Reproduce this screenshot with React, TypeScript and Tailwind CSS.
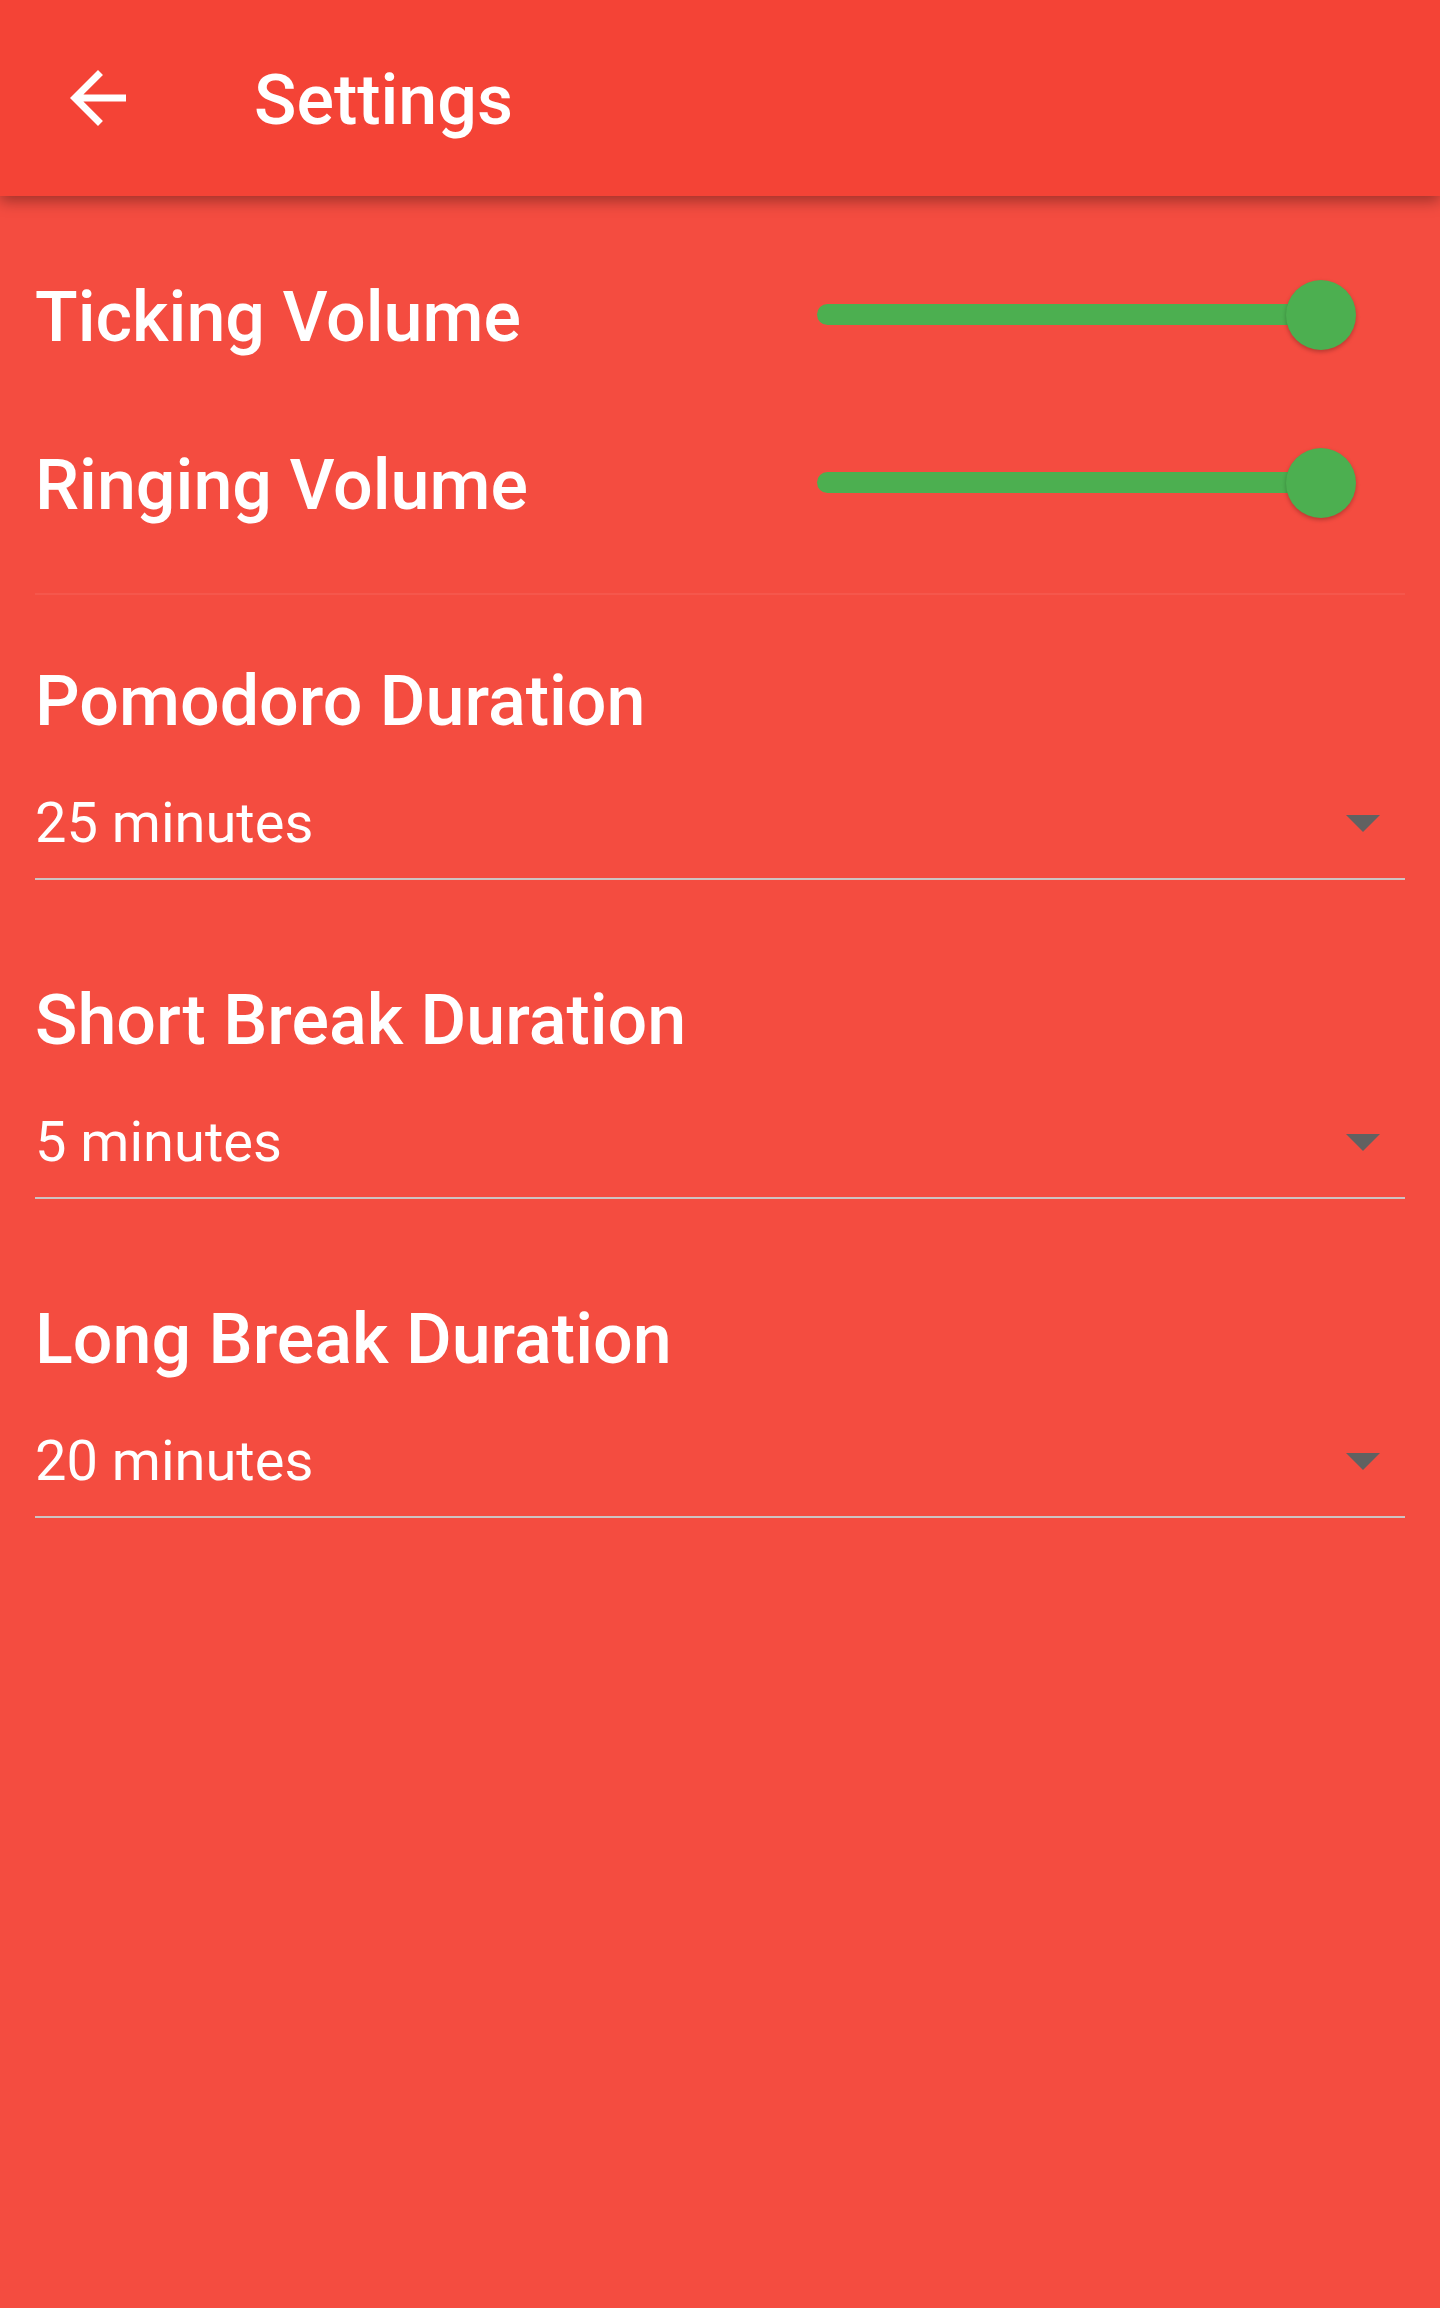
const volumes = [
  {label: "Ticking Volume", value: 100},
  {label: "Ringing Volume", value: 100},
];

const durations = [
  {label: "Pomodoro Duration", value: "25 minutes"},
  {label: "Short Break Duration", value: "5 minutes"},
  {label: "Long Break Duration", value: "20 minutes"},
];

const VolumeSlider = ({value}: {value: number}) => {
  return (
    <div className="relative h-[70px] w-[539px]">
      <div className="absolute top-[24px] left-0 h-[21px] rounded-full bg-[#4CAF50]" style={{width: `${(value / 100) * 504}px`}} />
      <div
        className="absolute top-0 h-[70px] w-[70px] rounded-full bg-[#4CAF50] shadow-[0_2px_4px_rgba(0,0,0,0.25)]"
        style={{left: `${(value / 100) * 469}px`}}
      />
    </div>
  );
};

const DurationSelect = ({label, value}: {label: string; value: string}) => {
  return (
    <div className="mt-[105px] first:mt-[71px]">
      <p className="text-[70px] leading-[70px] font-medium text-white">{label}</p>
      <div className="mt-[59px] flex h-[56px] items-center justify-between pr-[25px]">
        <span className="text-[56px] leading-[56px] text-white">{value}</span>
        <svg width="34" height="17" viewBox="0 0 34 17">
          <polygon points="0,0 34,0 17,17" fill="#616161" />
        </svg>
      </div>
      <div className="mt-[27px] h-[2px] w-full bg-[#cdc3c2]" />
    </div>
  );
};

const App = () => {
  return (
    <div className="min-h-screen w-full bg-[#F44C40] font-['Roboto',sans-serif]">
      <header className="relative z-10 flex h-[196px] items-center bg-[#F44336] shadow-[0_5px_14px_rgba(0,0,0,0.35)]">
        <svg className="ml-[56px]" width="84" height="84" viewBox="0 0 24 24" fill="white">
          <path d="M20 11H7.83l5.59-5.59L12 4l-8 8 8 8 1.41-1.41L7.83 13H20v-2z" />
        </svg>
        <h1 className="ml-[114px] pt-[4px] text-[70px] leading-[70px] font-medium text-white">Settings</h1>
      </header>

      <main className="px-[35px] pt-[35px]">
        {volumes.map((v) => (
          <div key={v.label} className="flex h-[168px] items-center justify-between">
            <span className="pt-[3px] text-[70px] leading-[70px] font-medium text-white">{v.label}</span>
            <div className="mr-[49px]">
              <VolumeSlider value={v.value} />
            </div>
          </div>
        ))}

        <div className="mt-[26px] h-[2px] w-full bg-[#F5574C]" />

        <div>
          {durations.map((d) => (
            <DurationSelect key={d.label} label={d.label} value={d.value} />
          ))}
        </div>
      </main>
    </div>
  );
};

export default App;
